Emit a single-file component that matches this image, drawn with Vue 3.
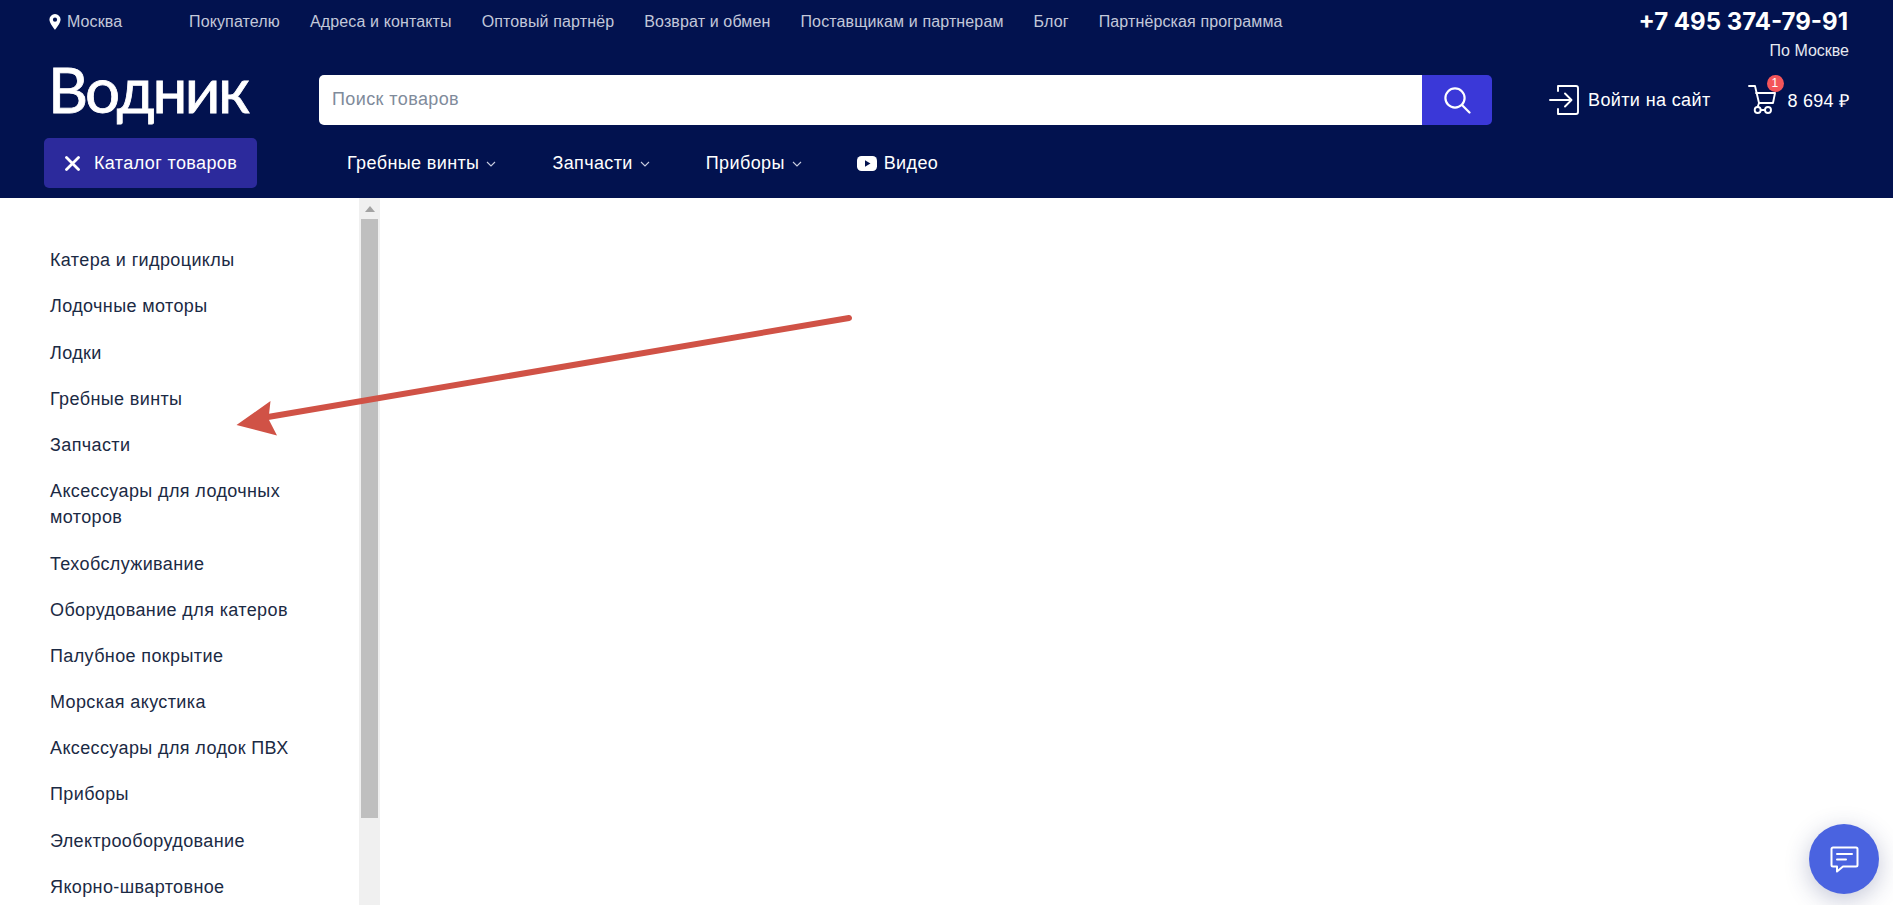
<script setup>
const topLinks = ['Покупателю', 'Адреса и контакты', 'Оптовый партнёр', 'Возврат и обмен', 'Поставщикам и партнерам', 'Блог', 'Партнёрская программа']
const navLinks = ['Гребные винты', 'Запчасти', 'Приборы']
const menu = ['Катера и гидроциклы', 'Лодочные моторы', 'Лодки', 'Гребные винты', 'Запчасти', 'Аксессуары для лодочных моторов', 'Техобслуживание', 'Оборудование для катеров', 'Палубное покрытие', 'Морская акустика', 'Аксессуары для лодок ПВХ', 'Приборы', 'Электрооборудование', 'Якорно-швартовное']
</script>

<template>
  <div class="page">
    <header class="header">
      <div class="top">
        <div class="city">
          <svg width="12" height="16" viewBox="0 0 12 16"><path fill="#fff" fill-rule="evenodd" d="M6 0a5.600 5.600 0 0 0-5.600 5.600C.4 9.300 6 16 6 16s5.600-6.700 5.600-10.400A5.600 5.600 0 0 0 6 0zm0 3.600a2.100 2.100 0 1 1 0 4.200 2.100 2.100 0 0 1 0-4.200z"/></svg>
          <span>Москва</span>
        </div>
        <nav class="top-links">
          <a v-for="l in topLinks" :key="l">{{ l }}</a>
        </nav>
        <div class="contact">
          <div class="phone">+7 495 374-79-91</div>
          <div class="region">По Москве</div>
        </div>
      </div>
      <div class="middle">
        <div class="logo">Водник</div>
        <div class="search">
          <div class="search-input">Поиск товаров</div>
          <div class="search-btn">
            <svg width="28" height="28" viewBox="0 0 28 28" fill="none" stroke="#fff" stroke-width="2.200" stroke-linecap="round"><circle cx="12" cy="12" r="9.600"/><path d="M19 19l7.500 7.500"/></svg>
          </div>
        </div>
        <div class="login">
          <svg width="30" height="30" viewBox="0 0 30 30" fill="none" stroke="#fff" stroke-width="1.900" stroke-linecap="round" stroke-linejoin="round"><path d="M9 1h18a2 2 0 0 1 2 2v24a2 2 0 0 1-2 2H10M9 29v-5M9 6V1M1 15h21M16 8.500l6.500 6.500-6.500 6.500"/></svg>
          <span>Войти на сайт</span>
        </div>
        <div class="cart">
          <svg class="cart-icon" width="28" height="30" viewBox="0 0 28 30" fill="none" stroke="#fff" stroke-width="1.900" stroke-linecap="round" stroke-linejoin="round"><path d="M1 1h6l4 17h14l2-10H8M11 18l-1.300 3.800"/><circle cx="9.700" cy="25" r="3"/><circle cx="20" cy="25" r="3"/><path d="M12.700 25h4.300"/></svg>
          <span class="badge">1</span>
          <span class="sum">8 694 ₽</span>
        </div>
      </div>
      <div class="bottom">
        <div class="catalog">
          <svg width="15" height="15" viewBox="0 0 15 15" stroke="#fff" stroke-width="2.800" stroke-linecap="round"><path d="M1.500 1.500l12 12M13.500 1.500l-12 12"/></svg>
          <span>Каталог товаров</span>
        </div>
        <nav class="main-nav">
          <a v-for="n in navLinks" :key="n" class="nav-item">
            {{ n }}
            <svg width="10" height="6" viewBox="0 0 10 6" fill="none" stroke="#c9cde0" stroke-width="1.100"><path d="M1 1l4 4 4-4"/></svg>
          </a>
          <a class="nav-item video">
            <svg width="20" height="15" viewBox="0 0 20 15"><rect width="20" height="15" rx="4.500" fill="#fff"/><path d="M8 4.300l5.500 3.200L8 10.700z" fill="#02124f"/></svg>
            Видео
          </a>
        </nav>
      </div>
    </header>
    <main class="main">
      <aside class="sidebar">
        <ul class="menu">
          <li v-for="m in menu" :key="m">{{ m }}</li>
        </ul>
        <div class="scrollbar">
          <div class="scroll-arrow"></div>
          <div class="scroll-thumb"></div>
        </div>
      </aside>
    </main>
    <svg class="annotation" width="640" height="130" viewBox="0 0 640 130">
      <path d="M617 7L30 107" fill="none" stroke="#d05246" stroke-width="6" stroke-linecap="round"/>
      <path d="M4.500 114L38.500 90 36.500 108 45 124.500z" fill="#d05246"/>
    </svg>
    <div class="chat">
      <svg width="29" height="27" viewBox="0 0 29 27" fill="none" stroke="#fff" stroke-width="2" stroke-linejoin="round" stroke-linecap="round"><path d="M3 1.500h23a1.500 1.500 0 0 1 1.500 1.500v16a1.500 1.500 0 0 1-1.500 1.500H13L7 25.500v-5H3A1.500 1.500 0 0 1 1.500 19V3A1.500 1.500 0 0 1 3 1.500z"/><path d="M7 8h15M7 13.500h9"/></svg>
    </div>
  </div>
</template>

<style>
html, body { margin: 0; overflow: hidden; background: #fff; }
</style>

<style scoped>
.page {
  position: relative;
  width: 1893px;
  height: 905px;
  overflow: hidden;
  font-family: "Liberation Sans", Arial, sans-serif;
  background: #fff;
}
.header {
  height: 198px;
  box-sizing: border-box;
  padding: 0 44px;
  background: #02124f;
  color: #fff;
}
.top {
  display: flex;
  height: 75px;
}
.city {
  display: flex;
  align-items: center;
  gap: 6px;
  height: 44px;
  margin-left: 5px;
  width: 140px;
  font-size: 16px;
  letter-spacing: 0.1px;
  color: #c3c8da;
}
.top-links {
  display: flex;
  gap: 30px;
  height: 44px;
  align-items: center;
  font-size: 16px;
  letter-spacing: 0.13px;
  color: #c3c8da;
}
.contact {
  margin-left: auto;
  margin-right: 1px;
  text-align: right;
}
.phone {
  margin-top: 7px;
  font-family: Inter, "Liberation Sans", sans-serif;
  font-size: 24px;
  font-weight: 700;
  line-height: 30px;
  white-space: nowrap;
}
.region {
  margin-top: 4px;
  margin-right: -1px;
  font-size: 16px;
  line-height: 20px;
  color: #e6e8f0;
}
.middle {
  display: flex;
  align-items: center;
  height: 50px;
}
.logo {
  width: 271px;
  margin-left: 4px;
  margin-bottom: 22px;
  font-family: Lato, "Open Sans", sans-serif;
  font-size: 62px;
  line-height: 50px;
  font-weight: 400;
  letter-spacing: -2.500px;
  -webkit-text-stroke: 0.8px #fff;
}
.search {
  display: flex;
  width: 1173px;
  height: 50px;
  flex: none;
}
.search-input {
  flex: 1;
  display: flex;
  align-items: center;
  padding: 0 0 2px 13px;
  background: #fff;
  border-radius: 5px 0 0 5px;
  font-size: 18px;
  letter-spacing: 0.4px;
  color: #7f8b9b;
}
.search-btn {
  width: 70px;
  display: flex;
  align-items: center;
  justify-content: center;
  background: #3a38d8;
  border-radius: 0 5px 5px 0;
}
.login {
  display: flex;
  align-items: center;
  gap: 9px;
  margin-left: 57px;
  font-size: 18px;
  letter-spacing: 0.38px;
  white-space: nowrap;
}
.cart {
  position: relative;
  display: flex;
  align-items: center;
  gap: 12px;
  margin-left: auto;
  font-size: 18px;
  letter-spacing: 0.2px;
  white-space: nowrap;
}
.badge {
  position: absolute;
  left: 19px;
  top: -10px;
  width: 17px;
  height: 17px;
  border-radius: 50%;
  background: #f4555a;
  font-size: 12px;
  line-height: 17px;
  text-align: center;
}
.bottom {
  display: flex;
  align-items: center;
  height: 50px;
  margin-top: 13px;
}
.catalog {
  display: flex;
  align-items: center;
  gap: 14px;
  box-sizing: border-box;
  width: 213px;
  height: 50px;
  padding-left: 21px;
  flex: none;
  background: #2c2a9c;
  border-radius: 5px;
  font-size: 18px;
  letter-spacing: 0.38px;
}
.main-nav {
  display: flex;
  align-items: center;
  gap: 56px;
  margin-left: 90px;
  padding-top: 1px;
  font-size: 18px;
  letter-spacing: 0.38px;
}
.nav-item {
  display: flex;
  align-items: center;
  gap: 7px;
  white-space: nowrap;
}
.video {
  margin-left: -1px;
}
.main {
  display: flex;
  height: 707px;
}
.sidebar {
  display: flex;
  width: 380px;
  height: 100%;
}
.menu {
  width: 359px;
  box-sizing: border-box;
  margin: 0;
  padding: 39.400px 30px 0 50px;
  list-style: none;
  overflow: hidden;
  font-size: 18px;
  letter-spacing: 0.38px;
  line-height: 26.400px;
  color: #1b2a44;
}
.menu li {
  padding: 9.880px 0;
}
.scrollbar {
  width: 21px;
  background: #f0f0f0;
}
.scroll-arrow {
  width: 0;
  height: 0;
  margin: 8px auto 7px;
  border-left: 5px solid transparent;
  border-right: 5px solid transparent;
  border-bottom: 6px solid #a3a3a3;
}
.scroll-thumb {
  width: 17px;
  height: 599px;
  margin-left: 2px;
  background: #bfbfbf;
}
.annotation {
  position: absolute;
  left: 232px;
  top: 311px;
}
.chat {
  position: absolute;
  left: 1809px;
  top: 824px;
  width: 70px;
  height: 70px;
  display: flex;
  align-items: center;
  justify-content: center;
  border-radius: 50%;
  background: #4a63e0;
  box-shadow: 0 6px 24px rgba(40, 50, 110, 0.28);
}
</style>
